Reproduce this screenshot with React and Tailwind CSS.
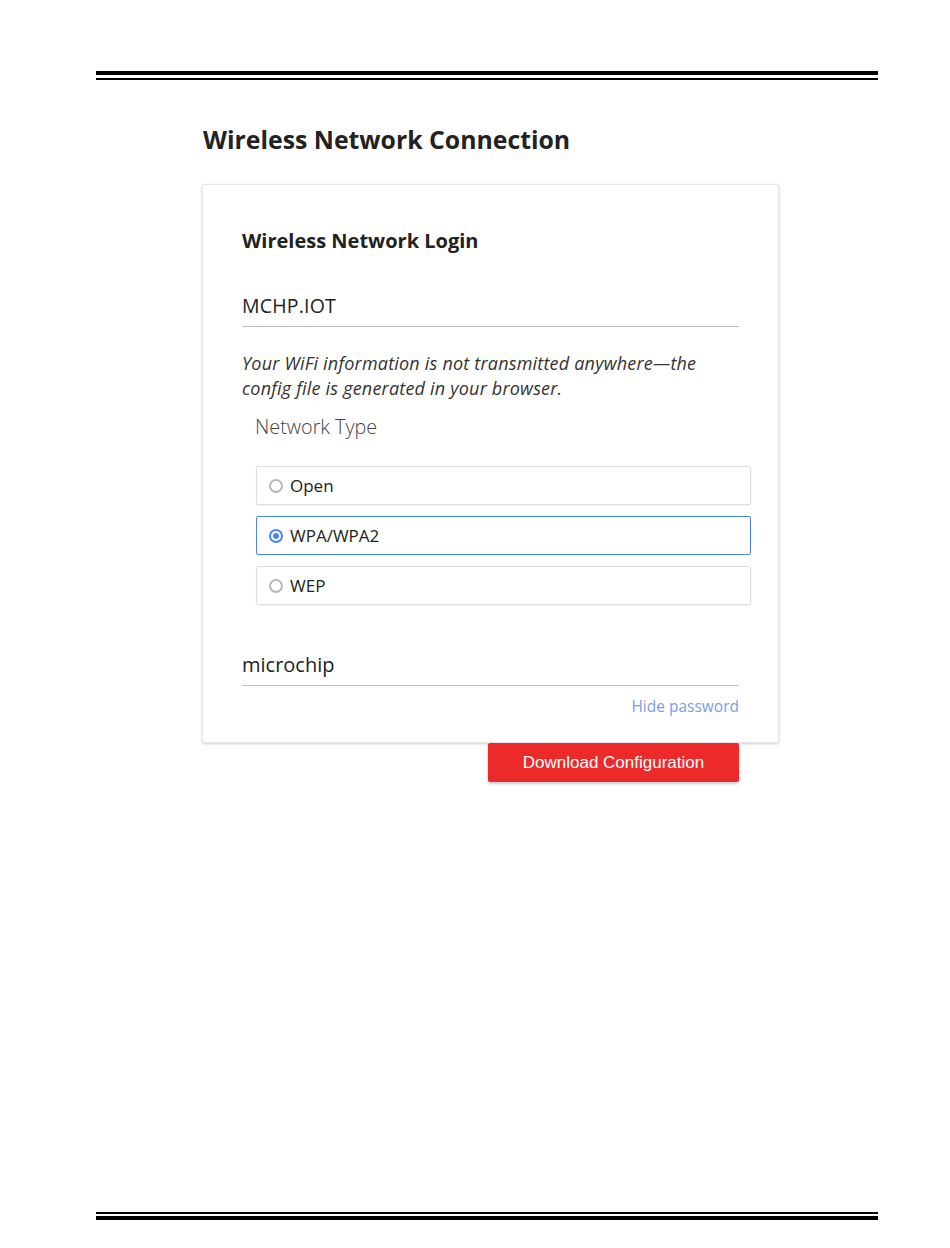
import React from 'react';

const options = [
  { label: 'Open', checked: false },
  { label: 'WPA/WPA2', checked: true },
  { label: 'WEP', checked: false },
];

function Radio({ checked }) {
  if (checked) {
    return (
      <span className="w-[14px] h-[14px] rounded-full border-[2px] border-[#4a86f0] flex items-center justify-center">
        <span className="w-[6px] h-[6px] rounded-full bg-[#4a86f0]" />
      </span>
    );
  }
  return <span className="w-[14px] h-[14px] rounded-full border-[2px] border-[#b8b8b8]" />;
}

export default function App() {
  return (
    <div className="w-[950px] h-[1248px] bg-white flex flex-col font-['Open_Sans',sans-serif] text-[#222]">
      {/* header rule */}
      <div className="ml-[96px] w-[782px] pt-[71px]">
        <div className="h-[4px] bg-black" />
        <div className="h-[2px] bg-black mt-[3px]" />
      </div>

      <h1 className="ml-[203px] mt-[43px] text-[24.8px] leading-[32px] font-bold text-[#222]">
        Wireless Network Connection
      </h1>

      <div className="ml-[202px] mt-[29px] w-[577px]">
        <div className="bg-white border border-[#e6e6e6] rounded-[2px] shadow-[0_1px_3px_rgba(0,0,0,0.18)] pl-[39px] pr-[39px] pt-[42px] pb-[26px]">
          <h2 className="text-[20px] leading-[28px] font-bold text-[#222]">Wireless Network Login</h2>

          <div className="mt-[37px] border-b border-[#bdbdbd] pb-[6px] text-[19.5px] leading-[28px] tracking-[0.2px] text-[#222]">
            MCHP.IOT
          </div>

          <p className="mt-[24px] text-[18px] leading-[25px] italic tracking-[0.2px] text-[#333] w-[470px]">
            Your WiFi information is not transmitted anywhere—the config file is generated in your browser.
          </p>

          <div className="ml-[13px] mt-[12px] text-[19.8px] leading-[28px] font-light text-[#444]">Network Type</div>

          <div className="ml-[14px] w-[495px] mt-[25px] flex flex-col gap-[11px]">
            {options.map((o) => (
              <div
                key={o.label}
                className={`h-[39px] rounded-[2px] flex items-center gap-[7px] pl-[12px] text-[17px] text-[#222] ${
                  o.checked
                    ? 'border-[1.5px] border-[#4a86f0]'
                    : 'border border-[#dedede] shadow-[0_1px_2px_rgba(0,0,0,0.06)]'
                }`}
              >
                <Radio checked={o.checked} />
                <span>{o.label}</span>
              </div>
            ))}
          </div>

          <div className="mt-[46px] border-b border-[#bdbdbd] pb-[6px] text-[20px] leading-[28px] text-[#222]">
            microchip
          </div>

          <div className="mt-[10px] flex justify-end">
            <span className="text-[15.5px] leading-[20px] text-[#7a9cf0]">Hide password</span>
          </div>
        </div>

        <div className="flex justify-end pr-[40px]">
          <button className="w-[251px] h-[39px] bg-[#ec2a2a] text-white text-[17px] font-['Liberation_Sans',Arial,sans-serif] rounded-[2px] shadow-[0_2px_3px_rgba(0,0,0,0.2)]">
            Download Configuration
          </button>
        </div>
      </div>

      <div className="flex-1" />

      {/* footer rule */}
      <div className="ml-[96px] w-[782px] mb-[28px]">
        <div className="h-[2px] bg-black" />
        <div className="h-[4px] bg-black mt-[2px]" />
      </div>
    </div>
  );
}
